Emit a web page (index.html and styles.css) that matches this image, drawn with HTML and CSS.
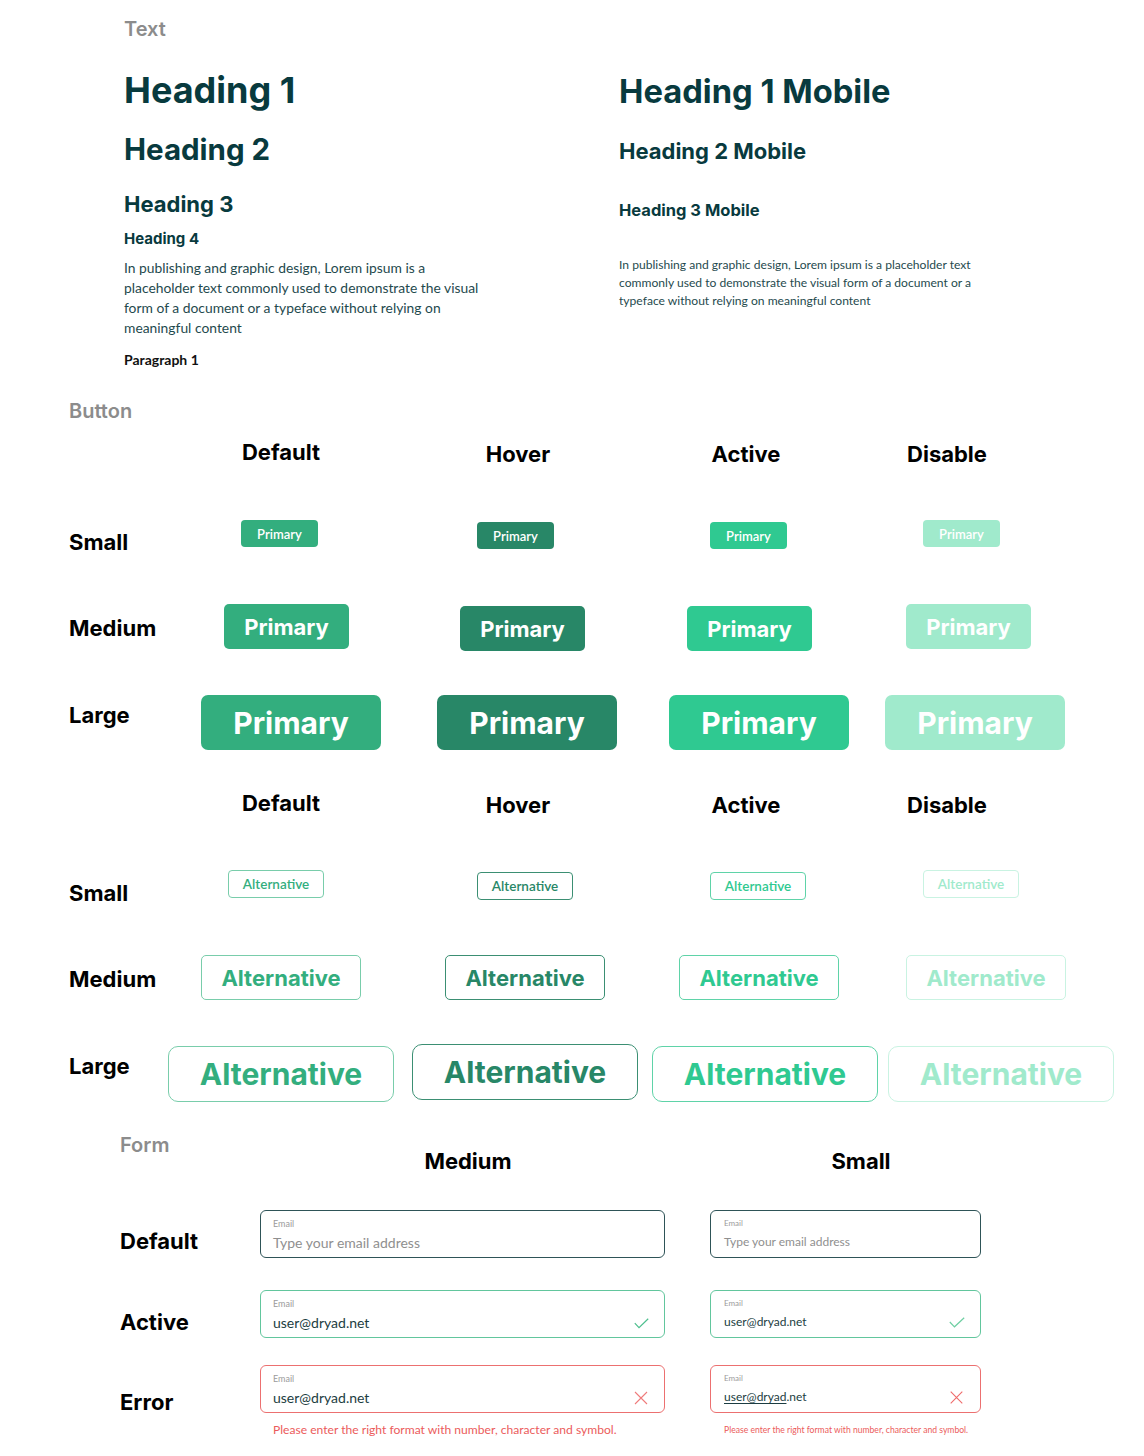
FILE: index.html
```html
<!DOCTYPE html>
<html lang="en">
<head>
<meta charset="utf-8">
<title>Design System</title>
<link rel="stylesheet" href="styles.css">
</head>
<body>
<div class="sheet">
  <section class="text-sec">
    <div class="sec-label">Text</div>
    <div class="text-cols">
      <div class="col">
        <h1 class="h1">Heading 1</h1>
        <h2 class="h2">Heading 2</h2>
        <h3 class="h3">Heading 3</h3>
        <h4 class="h4">Heading 4</h4>
        <p class="para">In publishing and graphic design, Lorem ipsum is a<br>placeholder text commonly used to demonstrate the visual<br>form of a document or a typeface without relying on<br>meaningful content</p>
        <p class="para-label">Paragraph 1</p>
      </div>
      <div class="col">
        <h1 class="h1m">Heading 1 Mobile</h1>
        <h2 class="h2m">Heading 2 Mobile</h2>
        <h3 class="h3m">Heading 3 Mobile</h3>
        <p class="para-m">In publishing and graphic design, Lorem ipsum is a placeholder text<br>commonly used to demonstrate the visual form of a document or a<br>typeface without relying on meaningful content</p>
      </div>
    </div>
  </section>

  <section class="btn-sec">
    <div class="sec-label">Button</div>

    <div class="state-head head-p">
      <span></span><span class="up1">Default</span><span>Hover</span><span>Active</span><span>Disable</span>
    </div>
    <div class="btn-row row-p-sm">
      <span class="row-label lm8">Small</span>
      <span class="btn p sm def">Primary</span>
      <span class="btn p sm hov n2">Primary</span>
      <span class="btn p sm act n2">Primary</span>
      <span class="btn p sm dis">Primary</span>
    </div>
    <div class="btn-row row-p-md">
      <span class="row-label lm10">Medium</span>
      <span class="btn p md def">Primary</span>
      <span class="btn p md hov n2">Primary</span>
      <span class="btn p md act n2">Primary</span>
      <span class="btn p md dis">Primary</span>
    </div>
    <div class="btn-row row-p-lg">
      <span class="row-label lm6">Large</span>
      <span class="btn p lg def">Primary</span>
      <span class="btn p lg hov">Primary</span>
      <span class="btn p lg act">Primary</span>
      <span class="btn p lg dis">Primary</span>
    </div>

    <div class="state-head head-a">
      <span></span><span class="up1">Default</span><span>Hover</span><span>Active</span><span>Disable</span>
    </div>
    <div class="btn-row row-a-sm">
      <span class="row-label lm9">Small</span>
      <span class="btn a sm def">Alternative</span>
      <span class="btn a sm hov n2">Alternative</span>
      <span class="btn a sm act n2">Alternative</span>
      <span class="btn a sm dis">Alternative</span>
    </div>
    <div class="btn-row row-a-md">
      <span class="row-label lm10">Medium</span>
      <span class="btn a md def">Alternative</span>
      <span class="btn a md hov">Alternative</span>
      <span class="btn a md act">Alternative</span>
      <span class="btn a md dis">Alternative</span>
    </div>
    <div class="btn-row row-a-lg">
      <span class="row-label lm8">Large</span>
      <span class="btn a lg def n2">Alternative</span>
      <span class="btn a lg hov">Alternative</span>
      <span class="btn a lg act n2">Alternative</span>
      <span class="btn a lg dis n2">Alternative</span>
    </div>
  </section>

  <section class="form-sec">
    <div class="form-head">
      <span class="sec-label">Form</span>
      <span class="size-head head-md">Medium</span>
      <span class="size-head head-sm">Small</span>
    </div>

    <div class="form-row row-def">
      <span class="row-label lm17">Default</span>
      <div class="field md f-def">
        <div class="f-label">Email</div>
        <div class="f-line"><span class="f-text ph">Type your email address</span></div>
      </div>
      <div class="field sm f-def">
        <div class="f-label">Email</div>
        <div class="f-line"><span class="f-text ph">Type your email address</span></div>
      </div>
    </div>

    <div class="form-row row-act">
      <span class="row-label lm18">Active</span>
      <div class="field md f-act">
        <div class="f-label">Email</div>
        <div class="f-line"><span class="f-text">user@dryad.net</span>
          <svg class="ico-check" width="15" height="11" viewBox="0 0 15 11"><polyline points="0.8,5.2 5,9.6 14.2,0.8" fill="none" stroke="#4dbf8e" stroke-width="1.2"/></svg>
        </div>
      </div>
      <div class="field sm f-act">
        <div class="f-label">Email</div>
        <div class="f-line"><span class="f-text">user@dryad.net</span>
          <svg class="ico-check" width="16" height="11" viewBox="0 0 16 11"><polyline points="0.8,5 5.5,9.8 15.2,0.8" fill="none" stroke="#6fcfa3" stroke-width="1.2"/></svg>
        </div>
      </div>
    </div>

    <div class="form-row row-err">
      <span class="row-label lm23">Error</span>
      <div class="field-wrap">
        <div class="field md f-err">
          <div class="f-label">Email</div>
          <div class="f-line"><span class="f-text">user@dryad.net</span>
            <svg class="ico-x" width="14" height="14" viewBox="0 0 14 14"><path d="M1 1 L13 13 M13 1 L1 13" fill="none" stroke="#ef7b7b" stroke-width="1.1"/></svg>
          </div>
        </div>
        <div class="err-msg md">Please enter the right format with number, character and symbol.</div>
      </div>
      <div class="field-wrap">
        <div class="field sm f-err">
          <div class="f-label">Email</div>
          <div class="f-line"><span class="f-text"><span class="ul">user@dryad</span>.net</span>
            <svg class="ico-x" width="13" height="13" viewBox="0 0 13 13"><path d="M0.7 0.7 L12.3 12.3 M12.3 0.7 L0.7 12.3" fill="none" stroke="#ef6b6b" stroke-width="1.1"/></svg>
          </div>
        </div>
        <div class="err-msg sm">Please enter the right format with number, character and symbol.</div>
      </div>
    </div>
  </section>
</div>
</body>
</html>
```

FILE: styles.css
```css
* { box-sizing: border-box; margin: 0; padding: 0; }

html, body { background: #ffffff; }

body {
  margin: 0;
  font-family: Inter, "Liberation Sans", sans-serif;
  color: #000;
}

.sheet { width: 1144px; }

.sec-label {
  font: 600 20px/24px Inter, "Liberation Sans", sans-serif;
  color: #8c8c8c;
}

/* ---------- Text section ---------- */
.text-sec { padding: 17px 0 0 124px; }

.text-cols {
  display: grid;
  grid-template-columns: 495px 1fr;
  align-items: start;
}

.col { display: flex; flex-direction: column; }

.h1, .h2, .h3, .h4, .h1m, .h2m, .h3m {
  font-family: Inter, "Liberation Sans", sans-serif;
  font-weight: 700;
  color: #083a3e;
  white-space: nowrap;
}

.h1 { font-size: 36px; line-height: 44px; margin-top: 27px; }
.h2 { font-size: 29.5px; line-height: 36px; margin-top: 19px; }
.h3 { font-size: 22px; line-height: 28px; margin-top: 23px; }
.h4 { font-size: 15px; line-height: 20px; margin-top: 11px; }

.para {
  font: 400 13.85px/20px Lato, "Noto Sans", sans-serif;
  color: #1f4a4e;
  margin-top: 9px;
  white-space: nowrap;
}

.para-label {
  font: 700 14px/20px Lato, "Noto Sans", sans-serif;
  color: #111;
  margin-top: 12px;
}

.h1m { font-size: 32.7px; line-height: 40px; margin-top: 30px; }
.h2m { font-size: 22px; line-height: 28px; margin-top: 26px; }
.h3m { font-size: 16.5px; line-height: 22px; margin-top: 34px; }

.para-m {
  font: 400 12.1px/18px Lato, "Noto Sans", sans-serif;
  color: #1f4a4e;
  margin-top: 35px;
  white-space: nowrap;
}

/* ---------- Button section ---------- */
.btn-sec { padding-left: 69px; margin-top: 29px; }

.state-head {
  display: grid;
  grid-template-columns: 92px 240px 234px 222px 180px;
  font: 700 22px/28px Inter, "Liberation Sans", sans-serif;
  color: #000;
  text-align: center;
}
.head-p { margin-top: 17px; }
.head-a { margin-top: 41px; }
.up1 { margin-top: -2px; }

.btn-row {
  display: grid;
  align-items: start;
}

.row-label {
  font: 700 22px/28px Inter, "Liberation Sans", sans-serif;
  color: #000;
  white-space: nowrap;
}
.lm6 { margin-top: 6px; }
.lm8 { margin-top: 8px; }
.lm9 { margin-top: 9px; }
.lm10 { margin-top: 10px; }
.lm17 { margin-top: 17px; }
.lm18 { margin-top: 18px; }
.lm23 { margin-top: 23px; }
.n2 { margin-top: 2px; }

.row-p-sm { grid-template-columns: 172px 236px 233px 213px auto; margin-top: 52px; }
.row-p-md { grid-template-columns: 155px 236px 227px 219px auto; margin-top: 48px; }
.row-p-lg { grid-template-columns: 132px 236px 232px 216px auto; margin-top: 44px; }
.row-a-sm { grid-template-columns: 159px 249px 233px 213px auto; margin-top: 51px; }
.row-a-md { grid-template-columns: 132px 244px 234px 227px auto; margin-top: 48px; }
.row-a-lg { grid-template-columns: 99px 244px 240px 236px auto; margin-top: 44px; }

.btn {
  display: flex;
  align-items: center;
  justify-content: center;
  white-space: nowrap;
  color: #fff;
}

.btn.sm { font: 600 13px/16px Lato, "Noto Sans", sans-serif; border-radius: 4px; }
.btn.md { font: 700 22px/26px Inter, "Liberation Sans", sans-serif; border-radius: 5px; }
.btn.lg { font: 700 30px/34px Inter, "Liberation Sans", sans-serif; border-radius: 7px; }

.btn.p.sm { width: 77px; height: 27px; }
.btn.p.md { width: 125px; height: 45px; }
.btn.p.lg { width: 180px; height: 55px; }

.btn.p.def { background: #33ae7e; }
.btn.p.hov { background: #288767; }
.btn.p.act { background: #2fc991; }
.btn.p.dis { background: #a0eacc; }

.btn.a { background: #fff; border: 1px solid; }
.btn.a.sm { width: 96px; height: 28px; font-size: 13.5px; }
.btn.a.md { width: 160px; height: 45px; }
.btn.a.lg { width: 226px; height: 56px; border-radius: 10px; }

.btn.a.def { color: #33ae7e; border-color: #79cdab; }
.btn.a.hov { color: #288767; border-color: #3b8f73; }
.btn.a.act { color: #2fc991; border-color: #5fd3a8; }
.btn.a.dis { color: #a0eacc; border-color: #c9f3e2; }

/* ---------- Form section ---------- */
.form-sec { padding-left: 120px; margin-top: 31px; }

.form-head {
  display: grid;
  grid-template-columns: 140px 450px 271px;
  align-items: start;
}

.size-head {
  font: 700 22px/28px Inter, "Liberation Sans", sans-serif;
  color: #000;
  text-align: center;
  margin-top: 14px;
}
.head-md { width: 405px; padding-left: 11px; }
.head-sm { padding-left: 31px; }

.form-row {
  display: grid;
  grid-template-columns: 140px 450px 271px;
  align-items: start;
}
.row-def { margin-top: 35px; }
.row-act { margin-top: 32px; }
.row-err { margin-top: 27px; }

.field {
  height: 48px;
  border: 1px solid;
  border-radius: 6px;
  padding: 7px 15px 0 12px;
  background: #fff;
}
.field.md { width: 405px; }
.field.sm { width: 271px; padding-left: 13px; }

.f-def { border-color: #2e5357; }
.f-act { border-color: #62c69d; }
.f-err { border-color: #ec7070; }

.f-label {
  font: 400 9px/11px Lato, "Noto Sans", sans-serif;
  color: #9b9b9b;
}
.field.sm .f-label { font-size: 8px; line-height: 10px; }

.f-line {
  display: flex;
  align-items: center;
  justify-content: space-between;
  height: 20px;
  margin-top: 4px;
}

.f-text {
  font: 400 14px/20px Lato, "Noto Sans", sans-serif;
  color: #1c3d42;
  white-space: nowrap;
}
.field.sm .f-text { font-size: 12px; }
.f-text.ph { color: #8f8f8f; }
.ul { text-decoration: underline; text-underline-offset: 2px; }

.ico-check, .ico-x { display: block; flex: none; }
.field.md .ico-x { margin-right: 1px; }
.field.sm .ico-x { margin-right: 2px; }

.err-msg {
  color: #eb5b5b;
  font-family: Lato, "Noto Sans", sans-serif;
  white-space: nowrap;
}
.err-msg.md { font-size: 12.1px; line-height: 14px; margin-top: 10px; padding-left: 13px; }
.err-msg.sm { font-size: 8.6px; line-height: 10px; margin-top: 12px; padding-left: 14px; }
```
